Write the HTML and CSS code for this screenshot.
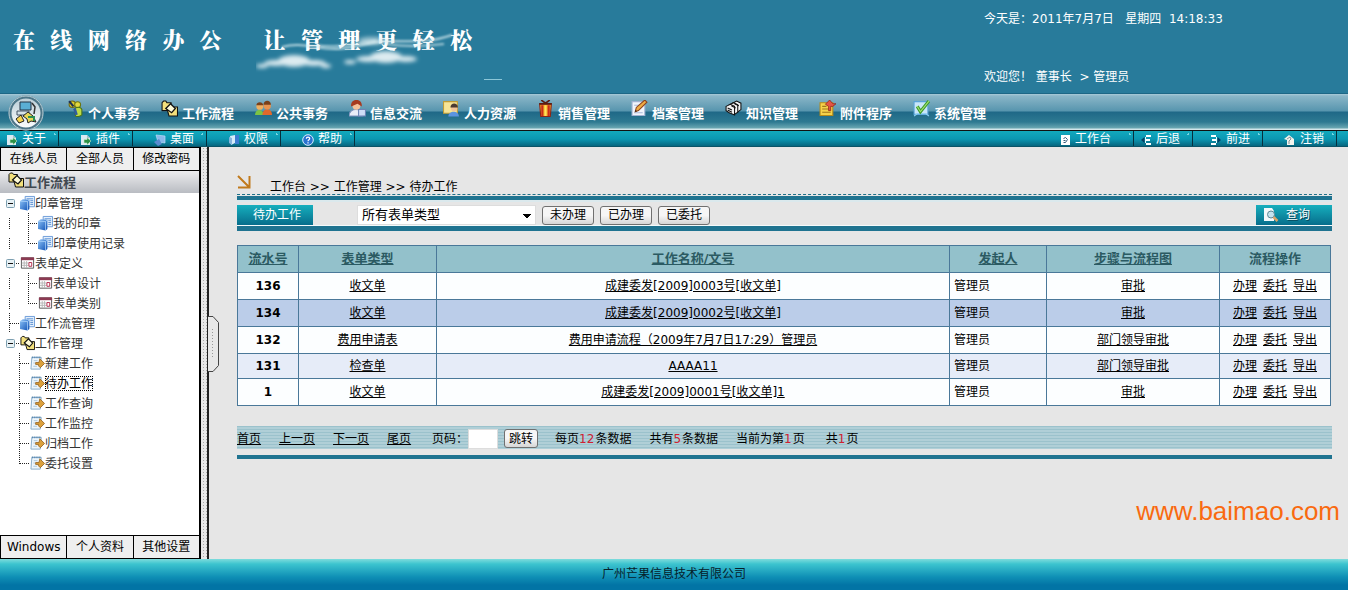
FILE: index.html
```html
<!DOCTYPE html>
<html lang="zh-CN">
<head>
<meta charset="utf-8">
<title>在线网络办公</title>
<link rel="stylesheet" href="styles.css">
</head>
<body>
<svg class="defs" aria-hidden="true">
  <defs>
    <linearGradient id="blue" x1="0" y1="0" x2="1" y2="1"><stop offset="0" stop-color="#8ec4f8"/><stop offset="1" stop-color="#0d4fb4"/></linearGradient>
    <linearGradient id="disc" x1="0" y1="0" x2="0" y2="1"><stop offset="0" stop-color="#b8ccd6"/><stop offset="1" stop-color="#fff"/></linearGradient>
    <filter id="soft" x="-20%" y="-40%" width="140%" height="180%"><feGaussianBlur stdDeviation="2"/></filter>
    <filter id="thin" x="-10%" y="-40%" width="120%" height="180%"><feGaussianBlur stdDeviation="0.8"/></filter>
  </defs>
  <symbol id="i-flow" viewBox="0 0 16 16"><path d="M1 2.500l1.500-1.500h2l1 1.500h4v7.500H1z" fill="#f3e07c" stroke="#111"/><path d="M5.500 7.500l1.500-1h8.500v8.500H7.500z" fill="#f3e07c" stroke="#111"/><path d="M4.500 8l4.500-4.500 4.500 4.500-3.500 4z" fill="#fffbd8" stroke="#111" stroke-width="1.200"/></symbol>
  <symbol id="i-book" viewBox="0 0 16 16"><path d="M5.500 1h10v11h-10z" fill="#e4f0fd" stroke="#6a9ad6"/><path d="M7 3.500h7M11 5.500h3M11 7.500h3M11 9.500h3" stroke="#5b8fd0"/><path d="M0 6l3-2 7 .5v10L8 16l-8-1.500z" fill="url(#blue)"/><path d="M0 6l8 .5V16M8 6.500l2-2" stroke="#bfe0ff" fill="none" stroke-width=".7"/></symbol>
  <symbol id="i-form" viewBox="0 0 16 16"><path d="M1.500 2.500h13v11h-13z" fill="#fff" stroke="#555"/><path d="M1 2h14v3H1z" fill="#8c3a52"/><path d="M2 8h7M2 10.500h7M4.500 6v7M7 6v7" stroke="#b5b5b5"/><path d="M9.500 7.500h3v4h-3z" fill="#fff" stroke="#b3294a"/></symbol>
  <symbol id="i-note" viewBox="0 0 16 16"><path d="M2 2h10l-1 12.500H1z" fill="#eef6fc" stroke="#86abca"/><path d="M2 2h10" stroke="#4d7ea8" stroke-dasharray="1 1" stroke-width="2"/><path d="M4 5.500h4M3.500 8h2M3.500 11.500h4" stroke="#a9c6dd"/><path d="M10.500 3.500l5 5-4.500 4.500-2-2V9.500H6v-2h3.500z" fill="#dba03c" stroke="#8d5a17" stroke-width=".8"/></symbol>
  <symbol id="i-doc" viewBox="0 0 12 12"><path d="M1 1h6l3 3v7H1z" fill="#dceaf2"/><path d="M7 1v3h3" fill="#a6bccb"/><path d="M4 5.500h3V3.500l4 3.500-4 4V9H4z" fill="#2c9147" stroke="#c5eccd" stroke-width=".6"/></symbol>
  <symbol id="i-desk" viewBox="0 0 12 12"><path d="M2 1l9 1v7l-7-1z" fill="#8ab9ea" stroke="#b9dcf8" stroke-width=".7"/><path d="M0 8l5-3 3 5-4 2z" fill="#5a8bd0"/></symbol>
  <symbol id="i-right" viewBox="0 0 12 12"><path d="M2 2l5-1v8l-4 2z" fill="#d6ecfa"/><path d="M7 1h4v9H7z" fill="#3c7cd0"/><path d="M1 3l3 1v7l-3-2z" fill="#87b5de"/></symbol>
  <symbol id="i-help" viewBox="0 0 12 12"><circle cx="6" cy="6" r="5.300" fill="#2a72d0" stroke="#d9efff"/><path d="M4.300 4.800C4.300 2.600 7.800 2.700 7.700 4.600 7.600 5.700 6 5.700 6 7.200" fill="none" stroke="#fff" stroke-width="1.200"/><path d="M5.400 8.200h1.200v1.200H5.400z" fill="#fff"/></symbol>
  <symbol id="i-page" viewBox="0 0 12 12"><path d="M2 1h9v10H2z" fill="#fff"/><path d="M4.500 4.500l2-1 2 2-2 3h-2M4.500 6.500h2" fill="none" stroke="#345c7c"/></symbol>
  <symbol id="i-back" viewBox="0 0 12 12"><path d="M6 2h5M6 6h4M6 10h5" stroke="#fff" stroke-width="2"/><path d="M4.500 3v6L1 6z" fill="#063d61"/><path d="M5.500 3v6" stroke="#dff"/></symbol>
  <symbol id="i-next" viewBox="0 0 12 12"><path d="M1 2h5M2 6h4M1 10h5" stroke="#fff" stroke-width="2"/><path d="M7.500 3v6L11 6z" fill="#063d61"/><path d="M6.500 3v6" stroke="#dff"/></symbol>
  <symbol id="i-exit" viewBox="0 0 12 12"><path d="M0 5l5-4 5 4v6H3V6z" fill="#f3f4ee"/><path d="M3 5l3-2 1 2-2 2v3" fill="none" stroke="#8a9094"/></symbol>
  <symbol id="i-minus" viewBox="0 0 9 9"><rect x=".5" y=".5" width="8" height="8" rx="1" fill="#e7f1f5" stroke="#7d9fb0"/><path d="M2 4.500h5" stroke="#111"/></symbol>
  <symbol id="r-mid" viewBox="0 0 38 20"><path d="M9.500 5v11M28.500 0v20M28 10.500h10" stroke="#222" stroke-dasharray="1 1" fill="none"/></symbol>
  <symbol id="r-end" viewBox="0 0 38 20"><path d="M9.500 5v11M28.500 0v11M28 10.500h10" stroke="#222" stroke-dasharray="1 1" fill="none"/></symbol>
  <symbol id="l-mid" viewBox="0 0 30 20"><path d="M19.500 0v20M20 10.500h9" stroke="#222" stroke-dasharray="1 1" fill="none"/></symbol>
  <symbol id="l-end" viewBox="0 0 30 20"><path d="M19.500 0v11M20 10.500h9" stroke="#222" stroke-dasharray="1 1" fill="none"/></symbol>
</svg>

<header class="banner">
  <h1 class="slogan">
    <span>在  线  网  络  办  公</span>
    <span class="second">让  管  理  更  轻  松
      <svg class="clouds" viewBox="0 0 250 56" aria-hidden="true">
        <g fill="#dcebf0" filter="url(#soft)"><ellipse cx="38" cy="33" rx="16" ry="6"/><ellipse cx="20" cy="35" rx="12" ry="3"/><ellipse cx="58" cy="35" rx="12" ry="3"/><ellipse cx="6" cy="38" rx="6" ry="2"/><ellipse cx="70" cy="38" rx="5" ry="2"/><ellipse cx="130" cy="29" rx="16" ry="6"/><ellipse cx="112" cy="31" rx="12" ry="3"/><ellipse cx="150" cy="31" rx="11" ry="3"/><ellipse cx="94" cy="34" rx="6" ry="2"/><ellipse cx="116" cy="13" rx="14" ry="4" opacity=".7"/></g>
        <g fill="none" stroke="#d8ecf0" filter="url(#thin)"><path d="M26 19c20-6 34 3 56 2 20-1 30-7 50-8 30 0 40 2 64-6" opacity=".8" stroke-width="2"/><path d="M60 17c20 4 40-2 60-4M130 16c18 3 40 2 58 0" opacity=".7" stroke-width="2"/></g>
        <path d="M228 51.500h18" stroke="#a7dae8" opacity=".8"/>
      </svg>
    </span>
  </h1>
  <div class="greeting">
    <p>今天是：<time>2011年7月7日&nbsp;&nbsp; 星期四 &nbsp;14:18:33</time></p>
    <p>欢迎您！ 董事长 &nbsp;&gt; 管理员</p>
  </div>
</header>

<nav class="nav">
  <svg class="emblem" viewBox="0 0 36 36" aria-hidden="true"><circle cx="18" cy="18" r="16" fill="url(#disc)" stroke="#4d7688" stroke-width="3"/><circle cx="18" cy="18" r="17" fill="none" stroke="#b7cdd6"/><path d="M12 7h11v8H12z" fill="#5aaed4" stroke="#234"/><path d="M9 16h12v4H9z" fill="#d5e2e8" stroke="#456"/><path d="M24 8l3 4-1 7" fill="none" stroke="#333" stroke-width="1.500"/><path d="M8 24l5-4 3 6-5 2z" fill="#f5d24e" stroke="#222"/><path d="M15 21l5-4 5 4 3 6-5-1-3 2-1-4z" fill="#e8d857" stroke="#222"/><path d="M20 22h6v4" stroke="#2d8f52" fill="none" stroke-width="2"/></svg>
  <a href="#"><svg viewBox="0 0 16 16"><circle cx="5" cy="4" r="3" fill="#d8c92c" stroke="#6f6611"/><path d="M2 1l4 5" stroke="#1d3157" stroke-width="2"/><circle cx="10" cy="4.500" r="2.800" fill="#e2d840" stroke="#6d7512"/><path d="M7 9c1-3 6-3 7 0v5c-2 2-5 2-6 1z" fill="#bedb46" stroke="#48711a"/><path d="M7 8l2 6" stroke="#305ba0" stroke-width="2.500"/></svg>个人事务</a>
  <a href="#"><svg><use href="#i-flow"/></svg>工作流程</a>
  <a href="#"><svg viewBox="0 0 16 16"><path d="M0 14c0-6 8-6 8 0z" fill="#7cc344"/><path d="M7 14c0-7 9-7 9 0z" fill="#e0682c"/><circle cx="4.500" cy="6" r="3.200" fill="#f0b060"/><circle cx="11.500" cy="5.500" r="3.500" fill="#e79450"/><path d="M1.300 5c0-4 6.400-4 6.400 0zM8 4.500c0-5 7-5 7 0z" fill="#79401a"/></svg>公共事务</a>
  <a href="#"><svg viewBox="0 0 16 16"><path d="M0 15c0-8 13-8 13 0z" fill="#e9edf8" stroke="#7f92bd"/><circle cx="7" cy="5.500" r="3.700" fill="#f5c19a"/><path d="M2 6c-1-8 11-8 10 0L8 3.500z" fill="#a63a20"/><path d="M9 9h6.500v6H9z" fill="#cfdcf5" stroke="#6f84b5"/></svg>信息交流</a>
  <a href="#"><svg viewBox="0 0 16 16"><path d="M.5 1.500h13v11H.5z" fill="#f7e596" stroke="#c09c35"/><path d="M5 15.500c0-6 10-6 10 0z" fill="#5c94e0"/><circle cx="10.500" cy="7.500" r="3" fill="#f3c499"/><path d="M7 7c0-5 7-5 7 0z" fill="#4b3b31"/></svg>人力资源</a>
  <a href="#"><svg viewBox="0 0 16 16"><path d="M2.500 4h11l-1 11.500h-9z" fill="#f3a525" stroke="#8e2415"/><path d="M5 5v10M11 5v10" stroke="#c72c1c" stroke-width="2"/><path d="M2 3.500h12M4 0l4 3 4-3" stroke="#5a1d12" fill="none" stroke-width="1.500"/><path d="M8 5v10" stroke="#ffe35a" stroke-width="2"/></svg>销售管理</a>
  <a href="#"><svg viewBox="0 0 16 16"><path d="M1 1.500h12v13H1z" fill="#f1f5fc" stroke="#a3b3d3"/><path d="M3 5h5M3 12h8" stroke="#a9b8d8"/><path d="M4 11l1-4 8-7 2 2-8 8z" fill="#f0ad45" stroke="#8b431d"/><path d="M4 11l1.500-.5-1-1z" fill="#111"/></svg>档案管理</a>
  <a href="#"><svg viewBox="0 0 16 16"><g fill="#f4f4f4" stroke="#111"><path d="M7 3l4-2 4 2v6l-4 3z"/><path d="M4 4.500l4-2 4 2v7l-3 2z"/><path d="M1 6l4-2 4 2v8l-5-2-3-2z"/></g><path d="M2.500 7.500l4 2M2.500 9.500l4 2M6 5.500l4 2M9 3.500l4 2" stroke="#111"/></svg>知识管理</a>
  <a href="#"><svg viewBox="0 0 16 16"><path d="M1 2.500h12v12H1z" fill="#f6d24a" stroke="#b78a18"/><path d="M3 6h4M3 8.500h8M3 11.500h8" stroke="#a1771a"/><path d="M10 0l3 3.500h3l-3 2.500h-2v4H9V6L6 4z" fill="#e35543" stroke="#8d2218" stroke-width=".7"/></svg>附件程序</a>
  <a href="#"><svg viewBox="0 0 16 16"><path d="M1 1.500h13v12H1z" fill="#c9e6fa" stroke="#5aa3d9"/><path d="M1 15l3-2h8l3 2" stroke="#8bd0f2" fill="none"/><path d="M4 6l3 5 8-10" stroke="#3c9b28" stroke-width="3" fill="none"/><path d="M4 6l3 5 8-10" stroke="#a4e074" fill="none"/></svg>系统管理</a>
</nav>

<div class="subbar">
  <a class="first" href="#"><svg><use href="#i-doc"/></svg>关于</a>
  <a href="#"><svg><use href="#i-doc"/></svg>插件</a>
  <a href="#"><svg><use href="#i-desk"/></svg>桌面</a>
  <a href="#"><svg><use href="#i-right"/></svg>权限</a>
  <a href="#"><svg><use href="#i-help"/></svg>帮助</a>
  <a class="push" href="#"><svg><use href="#i-page"/></svg>工作台</a>
  <a class="first" href="#"><svg><use href="#i-back"/></svg>后退</a>
  <a class="mid" href="#"><svg><use href="#i-next"/></svg>前进</a>
  <a href="#"><svg><use href="#i-exit"/></svg>注销</a>
</div>

<div class="body">
  <aside class="side">
    <div class="tabs"><button>在线人员</button><button>全部人员</button><button>修改密码</button></div>
    <h2 class="side-head"><svg><use href="#i-flow"/></svg>工作流程</h2>
    <ul class="tree">
      <li><span class="twig root"><svg class="box"><use href="#i-minus"/></svg></span><svg class="ico"><use href="#i-book"/></svg><a href="#">印章管理</a></li>
      <li><svg class="rail"><use href="#r-mid"/></svg><svg class="ico"><use href="#i-book"/></svg><a href="#">我的印章</a></li>
      <li><svg class="rail"><use href="#r-end"/></svg><svg class="ico"><use href="#i-book"/></svg><a href="#">印章使用记录</a></li>
      <li><span class="twig"><svg class="box"><use href="#i-minus"/></svg></span><svg class="ico"><use href="#i-form"/></svg><a href="#">表单定义</a></li>
      <li><svg class="rail"><use href="#r-mid"/></svg><svg class="ico"><use href="#i-form"/></svg><a href="#">表单设计</a></li>
      <li><svg class="rail"><use href="#r-end"/></svg><svg class="ico"><use href="#i-form"/></svg><a href="#">表单类别</a></li>
      <li><svg class="stub" viewBox="0 0 20 20"><path d="M9.500 0v20M10 10.500h9" stroke="#222" stroke-dasharray="1 1"/></svg><svg class="ico"><use href="#i-book"/></svg><a href="#">工作流管理</a></li>
      <li><span class="twig"><svg class="box"><use href="#i-minus"/></svg></span><svg class="ico"><use href="#i-flow"/></svg><a href="#">工作管理</a></li>
      <li><svg class="low"><use href="#l-mid"/></svg><svg class="ico"><use href="#i-note"/></svg><a href="#">新建工作</a></li>
      <li><svg class="low"><use href="#l-mid"/></svg><svg class="ico"><use href="#i-note"/></svg><a class="current" href="#">待办工作</a></li>
      <li><svg class="low"><use href="#l-mid"/></svg><svg class="ico"><use href="#i-note"/></svg><a href="#">工作查询</a></li>
      <li><svg class="low"><use href="#l-mid"/></svg><svg class="ico"><use href="#i-note"/></svg><a href="#">工作监控</a></li>
      <li><svg class="low"><use href="#l-mid"/></svg><svg class="ico"><use href="#i-note"/></svg><a href="#">归档工作</a></li>
      <li><svg class="low"><use href="#l-end"/></svg><svg class="ico"><use href="#i-note"/></svg><a href="#">委托设置</a></li>
    </ul>
    <div class="tabs"><button>Windows</button><button>个人资料</button><button>其他设置</button></div>
  </aside>
  <div class="splitter">
    <svg class="handle" viewBox="0 0 12 58" aria-hidden="true"><path d="M0 1.500h5l5.500 6v43l-5.500 6H0" fill="#e8e8e8" stroke="#444"/><path d="M4.500 14v30" stroke="#999" stroke-dasharray="1 2"/></svg>
  </div>

  <main class="main">
    <div class="crumbs">
      <svg viewBox="0 0 14 14" aria-hidden="true"><path d="M1 1l11 11M1 12.500h11.500V1" fill="none" stroke="#c17a1c" stroke-width="2"/></svg>
      <span>工作台 &gt;&gt; 工作管理 &gt;&gt; 待办工作</span>
    </div>
    <div class="toolbar">
      <strong class="chip">待办工作</strong>
      <select aria-label="表单类型"><option>所有表单类型</option></select>
      <button class="btn">未办理</button>
      <button class="btn">已办理</button>
      <button class="btn">已委托</button>
      <button class="search"><svg viewBox="0 0 16 16"><path d="M1 1h8l2 3v10H1z" fill="#f2f8fb"/><circle cx="8" cy="7.500" r="3.500" fill="#c4e3ee" stroke="#5b8794"/><path d="M10.500 10l4 4" stroke="#d8a368" stroke-width="2.500"/></svg>查询</button>
    </div>
    <table class="grid">
      <colgroup><col class="c-id"><col class="c-type"><col><col class="c-user"><col class="c-step"><col class="c-ops"></colgroup>
      <thead><tr><th><a href="#">流水号</a></th><th><a href="#">表单类型</a></th><th><a href="#">工作名称/文号</a></th><th><a href="#">发起人</a></th><th><a href="#">步骤与流程图</a></th><th>流程操作</th></tr></thead>
      <tbody>
        <tr><td class="id">136</td><td><a href="#">收文单</a></td><td><a href="#">成建委发[2009]0003号[收文单]</a></td><td class="user">管理员</td><td><a href="#">审批</a></td><td class="ops"><a href="#">办理</a><a href="#">委托</a><a href="#">导出</a></td></tr>
        <tr class="hover"><td class="id">134</td><td><a href="#">收文单</a></td><td><a href="#">成建委发[2009]0002号[收文单]</a></td><td class="user">管理员</td><td><a href="#">审批</a></td><td class="ops"><a href="#">办理</a><a href="#">委托</a><a href="#">导出</a></td></tr>
        <tr><td class="id">132</td><td><a href="#">费用申请表</a></td><td><a href="#">费用申请流程（2009年7月7日17:29）管理员</a></td><td class="user">管理员</td><td><a href="#">部门领导审批</a></td><td class="ops"><a href="#">办理</a><a href="#">委托</a><a href="#">导出</a></td></tr>
        <tr class="alt"><td class="id">131</td><td><a href="#">检查单</a></td><td><a href="#">AAAA11</a></td><td class="user">管理员</td><td><a href="#">部门领导审批</a></td><td class="ops"><a href="#">办理</a><a href="#">委托</a><a href="#">导出</a></td></tr>
        <tr><td class="id">1</td><td><a href="#">收文单</a></td><td><a href="#">成建委发[2009]0001号[收文单]1</a></td><td class="user">管理员</td><td><a href="#">审批</a></td><td class="ops"><a href="#">办理</a><a href="#">委托</a><a href="#">导出</a></td></tr>
      </tbody>
    </table>
    <div class="pager">
      <a href="#">首页</a><a href="#">上一页</a><a href="#">下一页</a><a href="#">尾页</a>
      <form class="jump"><label for="page">页码：</label><input id="page" type="text"><button class="btn" type="button">跳转</button></form>
      <span>每页<em>12</em>条数据</span><span>共有<em>5</em>条数据</span><span>当前为第<em>1</em>页</span><span class="total">共<em>1</em>页</span>
    </div>
    <span class="mark">www.baimao.com</span>
  </main>
</div>

<footer class="foot">广州芒果信息技术有限公司</footer>
</body>
</html>
```
FILE: styles.css
```css
* { box-sizing: border-box; }

body {
  margin: 0;
  min-height: 100vh;
  display: flex;
  flex-direction: column;
  font: 12px/16px "DejaVu Sans", "Noto Sans CJK SC", sans-serif;
  color: #000;
  background: #e6e6e6;
}

a { color: inherit; }
button, input, select { font: inherit; color: inherit; margin: 0; }
.defs { display: block; width: 0; height: 0; }

/* Banner */
.banner {
  height: 93px;
  display: flex;
  justify-content: space-between;
  background: #287b9b;
  color: #fff;
}
.slogan {
  margin: 0;
  padding: 24px 0 0 13px;
  display: flex;
  gap: 42px;
  font: 900 22px/34px "DejaVu Sans", "Noto Serif CJK SC", "Noto Sans CJK SC", serif;
  white-space: pre;
}
.slogan span { display: block; height: 34px; }
.slogan .second { position: relative; width: 216px; }
.clouds { position: absolute; left: -8px; top: 4px; width: 250px; height: 56px; }
.greeting {
  width: 364px;
  padding: 11px 0 8px;
  display: flex;
  flex-direction: column;
  justify-content: space-between;
}
.greeting p { margin: 0; }

/* Main navigation */
.nav {
  height: 38px;
  padding-left: 8px;
  display: flex;
  align-items: center;
  border-top: 1px solid #1d6786;
  background: linear-gradient(#a9cbd8 0, #8ab6c8 2px, #5795ae 17px, #1f6887 18px, #2e7a92 28px, #69a7b2 34px, #d2e6ea 35px, #d2e6ea 36px, #111 36px);
}
.emblem { width: 36px; height: 36px; margin-right: 23px; }
.nav a {
  width: 94px;
  display: flex;
  gap: 4px;
  padding-top: 3px;
  font-size: 13px;
  line-height: 18px;
  font-weight: 700;
  color: #fff;
  text-decoration: none;
  white-space: nowrap;
}
.nav a svg { width: 17px; height: 17px; margin-top: -5px; flex: none; }

/* Secondary bar */
.subbar {
  height: 16px;
  display: flex;
  padding-right: 11px;
  background: linear-gradient(#12a9bd, #0b97b2 8px, #07667f);
  border-bottom: 1px solid #0b5468;
  color: #fff;
}
.subbar a {
  width: 74px;
  padding-top: 2px;
  padding-right: 12px;
  display: flex;
  align-items: center;
  justify-content: flex-end;
  gap: 4px;
  border-right: 1px solid #062f3c;
  line-height: 13px;
  text-decoration: none;
  background: radial-gradient(circle, #7cd6e2 0 1px, transparent 1px) right 2px top 2px / 3px 3px no-repeat;
}
.subbar .first { width: 59px; }
.subbar .mid { width: 70px; }
.subbar .push { margin-left: auto; padding-right: 22px; width: 90px; }
.subbar svg { width: 12px; height: 12px; }

/* Body */
.body { flex: 1; display: flex; }
.side {
  width: 201px;
  display: flex;
  flex-direction: column;
  background: #fff;
  border-right: 2px solid #000;
}
.tabs { display: flex; height: 24px; border: 1px solid #000; border-right: 0; }
.tabs button {
  flex: 1;
  padding: 0;
  border: 0;
  border-right: 1px solid #000;
  background: #efefef;
  white-space: nowrap;
}
.tabs button:last-child { border-right: 0; }
.side-head {
  margin: 0;
  height: 22px;
  padding: 2px 0 0 8px;
  display: flex;
  align-items: center;
  font-size: 13px;
  line-height: 20px;
  color: #404850;
  background: linear-gradient(#ececee, #b9bcc2);
}
.side-head svg { width: 16px; height: 16px; margin-bottom: 6px; }
.tree { flex: 1; margin: 0; padding: 0; list-style: none; }
.tree li { height: 20px; display: flex; align-items: center; }
.tree a { padding-top: 1px; color: #333; text-decoration: none; line-height: 14px; }
.tree .current { color: #000; outline: 1px dotted #000; outline-offset: -1px; }
.ico { width: 15px; height: 16px; flex: none; }
.twig { width: 20px; padding-left: 6px; display: flex; background: repeating-linear-gradient(90deg, #222 0 1px, transparent 1px 2px) right 50% / 4px 1px no-repeat; }
.twig.root { background: none; }
.box { width: 9px; height: 9px; }
.rail { width: 38px; height: 20px; }
.low { width: 30px; height: 20px; }
.stub { width: 20px; height: 20px; }

.splitter {
  width: 8px;
  position: relative;
  border-right: 2px solid #222;
  background: radial-gradient(circle, #aaa 0 1px, transparent 1px) 1px 0 / 3px 3px #e8e8e8;
}
.handle { position: absolute; left: 7px; top: 168px; width: 12px; height: 58px; }

.main {
  flex: 1;
  min-width: 0;
  position: relative;
  padding: 28px 16px 16px 28px;
}
.crumbs {
  height: 20px;
  display: flex;
  gap: 19px;
  border-bottom: 1px dashed #1d6f88;
}
.crumbs svg { width: 14px; height: 14px; }
.crumbs span { padding-top: 4px; }
.toolbar {
  margin-top: 1px;
  height: 35px;
  padding-top: 4px;
  display: flex;
  align-items: center;
  gap: 6px;
  border-top: 4px solid #1f7390;
  border-bottom: 5px solid #1f7390;
  box-shadow: inset 0 2px #dbe9ed, inset 0 -1px #f4fafb;
}
.chip, .search {
  width: 76px;
  height: 20px;
  color: #fff;
  background: linear-gradient(#16afbd, #076d8b);
}
.chip { padding-left: 4px; text-align: center; font-weight: 400; line-height: 21px; margin-right: 38px; }
.search {
  margin-left: auto;
  padding: 0 0 0 7px;
  border: 0;
  display: flex;
  align-items: center;
  gap: 7px;
  text-shadow: 1px 1px #074a5c;
}
.search svg { width: 16px; height: 16px; }
.toolbar select {
  width: 179px;
  height: 20px;
  padding: 0 4px;
  border: 1px solid #ddd;
  font-size: 13px;
  line-height: 16px;
  appearance: none;
  background: conic-gradient(from 315deg at 50% 100%, #000 90deg, transparent 0) right 4px top 8px / 8px 4px no-repeat #fff;
}
.btn {
  width: 52px;
  height: 19px;
  padding: 0;
  border: 1px solid #707070;
  border-radius: 3px;
  line-height: 16px;
  background: linear-gradient(#f6f6f6 50%, #d6d6d6);
}

/* Task table */
.grid {
  width: calc(100% - 1px);
  margin-top: 14px;
  table-layout: fixed;
  border-collapse: collapse;
}
.c-id { width: 61px; }
.c-type { width: 138px; }
.c-user { width: 97px; }
.c-step { width: 173px; }
.c-ops { width: 111px; }
.grid th, .grid td {
  height: 27px;
  padding: 0 4px;
  border: 1px solid #4a7899;
  text-align: center;
  white-space: nowrap;
}
.grid th { font-size: 13px; color: #2b5a62; background: #93c1cb; }
.grid tbody tr { background: #fcfeff; }
.grid tbody .hover { background: #bbcde9; }
.grid tbody .alt { background: #e6ecf8; }
.grid .alt td { height: 25px; }
.grid .id { font-weight: 700; }
.grid .user { text-align: left; }
.ops a + a { margin-left: 6px; }

/* Pager */
.pager {
  margin-top: 20px;
  height: 23px;
  padding-top: 2px;
  display: flex;
  align-items: center;
  gap: 18px;
  position: relative;
  background: repeating-linear-gradient(#9bc2cc 0 1px, #b0cfd7 1px 3px);
}
.pager::after {
  content: "";
  position: absolute;
  left: 0;
  right: 0;
  top: 29px;
  height: 4px;
  background: #1f7390;
}
.pager em { font-style: normal; color: #d02030; margin: 0 1px 0 0; }
.pager .total { padding-left: 3px; }
.jump { display: flex; align-items: center; margin: 0 0 0 3px; }
.jump input { width: 30px; height: 20px; padding: 0 2px; border: 1px solid #ddd; background: #fff; }
.jump .btn { width: 34px; margin: 0 -1px 0 6px; }

.mark {
  position: absolute;
  right: 8px;
  bottom: 32px;
  font: 26px/32px "Liberation Sans", Arial, sans-serif;
  color: #f96a10;
}

.foot {
  height: 31px;
  text-align: center;
  line-height: 31px;
  color: #06202a;
  background: linear-gradient(#7fdcdc, #3cc4cf 5px, #0f8fb5 18px, #0274a5 26px);
}
```
